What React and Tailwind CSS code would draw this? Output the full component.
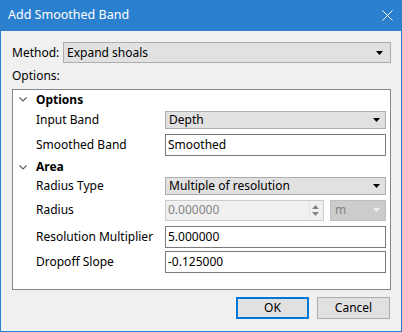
import React from "react";

const font = { fontFamily: '"Noto Sans", "Open Sans", sans-serif' };

function Arrow({ color = "#000" }) {
  return (
    <svg width="7" height="4" viewBox="0 0 7 4">
      <polygon points="0,0 7,0 3.5,4" fill={color} />
    </svg>
  );
}

function Chevron() {
  return (
    <svg width="8" height="5" viewBox="0 0 8 5" className="ml-[6px] mr-[9px]">
      <polyline points="0.5,0.5 4,4 7.5,0.5" fill="none" stroke="#606060" strokeWidth="1.2" />
    </svg>
  );
}

function Combo({ text }) {
  return (
    <div className="w-[221px] h-[18px] bg-[#e1e1e1] border border-[#adadad] flex items-center justify-between pl-[3px] pr-[5px] text-black">
      <span>{text}</span>
      <Arrow />
    </div>
  );
}

function TextBox({ text }) {
  return (
    <div className="w-[221px] h-[22px] bg-white border border-[#7a7a7a] flex items-center pl-[2px] text-black">
      {text}
    </div>
  );
}

function Row({ label, h, children }) {
  return (
    <div className="flex items-center" style={{ height: h }}>
      <div className="w-[152px] pl-[23px] text-black">{label}</div>
      {children}
    </div>
  );
}

function Header({ label, h }) {
  return (
    <div className="flex items-center font-bold text-black" style={{ height: h }}>
      <Chevron />
      <span>{label}</span>
    </div>
  );
}

export default function App() {
  return (
    <div
      className="w-[402px] h-[332px] bg-[#f0f0f0] border-x border-b border-[#2b7fcf] flex flex-col text-[12px] leading-none overflow-hidden"
      style={font}
    >
      <div className="h-[31px] shrink-0 bg-[#2b7fcf] flex items-center justify-between pl-[8px] pr-[9px] text-white -mx-px">
        <span className="text-[12.5px]">Add Smoothed Band</span>
        <svg width="11" height="11" viewBox="0 0 11 11">
          <path d="M0.5 0.5 L10.5 10.5 M10.5 0.5 L0.5 10.5" stroke="#fff" strokeWidth="1" />
        </svg>
      </div>
      <div className="pl-[11px] pr-[10px] flex flex-col">
        <div className="flex items-center mt-[11px] h-[21px]">
          <span className="w-[51px] text-black">Method:</span>
          <div className="flex-1 h-[21px] bg-[#e1e1e1] border border-[#adadad] flex items-center justify-between pl-[3px] pr-[7px] text-black">
            <span>Expand shoals</span>
            <Arrow />
          </div>
        </div>
        <div className="h-[26px] flex items-center text-black">Options:</div>
        <div className="h-[201px] bg-white border border-[#828790] flex flex-col">
          <Header label="Options" h={19} />
          <Row label="Input Band" h={22}>
            <Combo text="Depth" />
          </Row>
          <Row label="Smoothed Band" h={27}>
            <TextBox text="Smoothed" />
          </Row>
          <Header label="Area" h={18} />
          <Row label="Radius Type" h={20}>
            <Combo text="Multiple of resolution" />
          </Row>
          <Row label="Radius" h={28}>
            <div className="flex gap-[6px]">
              <div className="w-[159px] h-[21px] bg-[#f0f0f0] border border-[#cccccc] flex items-center justify-between pl-[2px] pr-[3px] text-[#838383]">
                <span>0.000000</span>
                <div className="w-[11px] h-[17px] flex flex-col items-center justify-center gap-[3px] border-l border-[#e0e0e0]">
                  <svg width="7" height="4" viewBox="0 0 7 4"><polygon points="0,4 7,4 3.5,0" fill="#838383" /></svg>
                  <svg width="7" height="4" viewBox="0 0 7 4"><polygon points="0,0 7,0 3.5,4" fill="#838383" /></svg>
                </div>
              </div>
              <div className="w-[56px] h-[21px] bg-[#cccccc] border border-[#bfbfbf] flex items-center justify-between pl-[4px] pr-[5px] text-[#838383]">
                <span>m</span>
                <Arrow color="#f0f0f0" />
              </div>
            </div>
          </Row>
          <Row label="Resolution Multiplier" h={25}>
            <TextBox text="5.000000" />
          </Row>
          <Row label="Dropoff Slope" h={25}>
            <TextBox text="-0.125000" />
          </Row>
        </div>
        <div className="flex justify-end gap-[8px] mt-[7px] pr-[1px]">
          <div className="w-[73px] h-[22px] bg-[#e1e1e1] border-2 border-[#0078d7] flex items-center justify-center text-black">OK</div>
          <div className="w-[73px] h-[22px] bg-[#e1e1e1] border border-[#adadad] flex items-center justify-center text-black">Cancel</div>
        </div>
      </div>
    </div>
  );
}
